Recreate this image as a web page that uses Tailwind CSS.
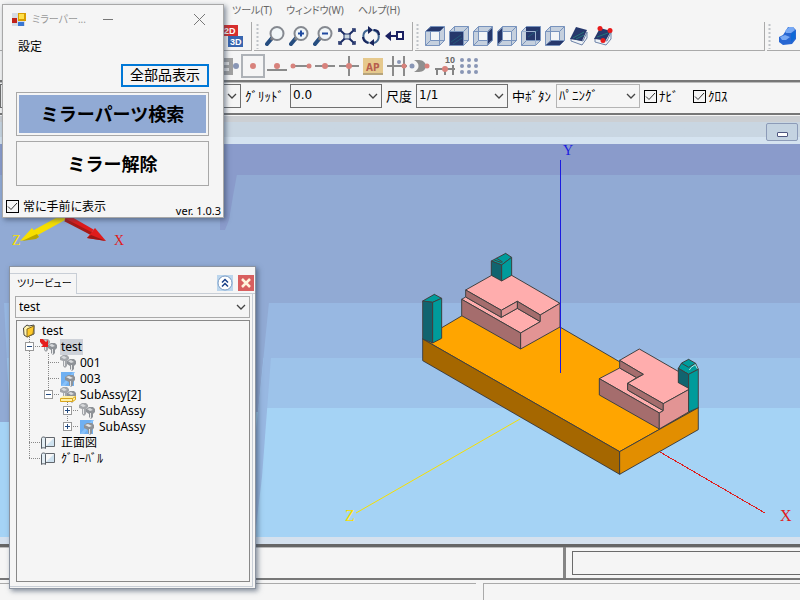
<!DOCTYPE html>
<html lang="ja">
<head>
<meta charset="utf-8">
<title>test</title>
<script src="https://cdn.jsdelivr.net/npm/@tailwindcss/browser@4"></script>
</head>
<body class="font-['Noto_Sans','Noto_Sans_CJK_JP',sans-serif] text-xs text-black bg-[#f5f5f5]">
<svg class="hidden" aria-hidden="true">
  <defs>
    <symbol id="cube" viewBox="0 0 20 20">
      <path d="M.5 5.5 5.500 .5h14v14l-5 5H.5z" fill="#c5d0de"/>
      <path d="M5.500 5.500h9v9h-9z" fill="#f3f5f7"/>
      <path d="M.5 5.500h14v14H.5zM5.500 .5h14v14h-14zM.5 5.500l5-5M14.500 5.500l5-5M14.500 19.500l5-5M.5 19.500l5-5" fill="none" stroke="#7893bd"/>
    </symbol>
    <symbol id="lens" viewBox="0 0 20 20">
      <path d="M2 18 7 12" stroke="#254d80" stroke-width="4" stroke-linecap="round"/>
      <path d="M6 14 8 11" stroke="#72777e" stroke-width="3"/>
      <circle cx="12" cy="7.500" r="6.500" fill="#f1f6f8" stroke="#858990" stroke-width="2"/>
    </symbol>
    <symbol id="bolt" viewBox="0 0 16 16">
      <path d="M0 2 3 0h4l2 2v2L7 6v5L5 13 3 11V6L0 5z" fill="#a3a6aa"/>
      <path d="M7 6 10 4h4l2 2v3l-2 2v3l-2 2-2-2v-3L7 9z" fill="#8e9297"/>
      <path d="M1 2 4 1l3 2-3 1zM8 6l3-1 3 2-3 1z" fill="#d8dadd"/>
      <path d="M4 6h1v5H4zM11 10h1v5h-1z" fill="#e8e9ea"/>
    </symbol>
    <symbol id="mirror" viewBox="0 0 16 16">
      <path d="M1 1h13v14H1z" fill="#6fb0f2"/>
      <path d="M1 15 13 1h2L5 15z" fill="#87c1fa"/>
      <path d="M5 6 8 4h5l2 2v3l-2 2v3l-2 2-2-2v-3L5 9z" fill="#8e9297"/>
      <path d="M6 6 9 5l4 2-3 1zM10 10h1v5h-1z" fill="#e4e6e8"/>
    </symbol>
    <symbol id="view" viewBox="0 0 16 16">
      <path d="M4.500 2.500h9v9h-9z" fill="#f7f7f7" stroke="#62676d"/>
      <path d="M5 11 13 3v8z" fill="#cfe2ef"/>
      <path d="M.5 3.500c0-2 4-2 4 0v10c0-1-4-1-4 0z" fill="#e3edf3" stroke="#555c64"/>
    </symbol>
    <symbol id="chev" viewBox="0 0 10 10"><path d="M1 3 5 7 9 3" fill="none" stroke="#444" stroke-width="1.300"/></symbol>
    <symbol id="grip" viewBox="0 0 3 26"><path d="M1.500 1v25" stroke="#bfc3c8" stroke-width="2" stroke-dasharray="2 2"/></symbol>
  </defs>
</svg>

<div class="relative flex h-screen flex-col overflow-hidden">
  <nav class="flex h-[22px] shrink-0 items-center gap-[14px] pl-[232px] text-[10px] text-[#666] [font-feature-settings:'palt']">
    <a href="#">ツール(T)</a><a href="#">ウィンドウ(W)</a><a href="#">ヘルプ(H)</a>
  </nav>

  <div class="flex h-[29px] shrink-0 gap-[2px]">
    <div class="flex w-[252px] items-center justify-end border-r border-b border-[#aaa] pr-2">
      <button aria-label="2D 3D"><svg class="h-6 w-5" viewBox="0 0 20 24"><path d="M0 1h15v11H0z" fill="#d72e2d"/><path d="M5 12h15v11H5z" fill="#3866b0"/><g font-family="Liberation Sans" font-weight="bold" font-size="9" fill="#fff"><text x="1" y="10">2D</text><text x="7" y="21">3D</text></g></svg></button>
    </div>
    <div class="flex w-[159px] items-center border-r border-b border-[#aaa] pl-[2px]">
      <svg class="mr-1 h-[26px] w-[3px]"><use href="#grip"/></svg>
      <button class="grid h-6 w-6 place-items-center" aria-label="ズーム"><svg class="h-5 w-5"><use href="#lens"/></svg></button>
      <button class="grid h-6 w-6 place-items-center" aria-label="拡大"><svg class="h-5 w-5"><use href="#lens"/><path d="M9 7.500h6M12 4.500v6" stroke="#1f4aa0" stroke-width="2"/></svg></button>
      <button class="grid h-6 w-6 place-items-center" aria-label="縮小"><svg class="h-5 w-5"><use href="#lens"/><path d="M9 7.500h6" stroke="#1f4aa0" stroke-width="2"/></svg></button>
      <button class="grid h-6 w-6 place-items-center" aria-label="全体表示"><svg class="h-5 w-5" viewBox="0 0 20 20" stroke="#1b2d66" stroke-width="1.500"><path d="M3 4 17 17M17 4 3 17" stroke-width="2"/><path d="M7 8h6v5H7z" fill="#c9d6df" stroke-width="1"/><path d="M2 6V3h3M15 3h3v3M2 15v3h3M15 18h3v-3" fill="none"/></svg></button>
      <button class="grid h-6 w-6 place-items-center" aria-label="回転"><svg class="h-5 w-5" viewBox="0 0 20 20" fill="none" stroke="#3f6591" stroke-width="2"><path d="M8 17C0 14 1 5 8 4M12 4c8 2 7 11 1 13"/><path d="M7 0v8l5-4zM13 13v7l-5-3z" fill="#17245c" stroke="none"/><path d="M2 11c0 3 2 5 5 6M18 9c0-3-2-5-5-5" stroke="#17245c"/></svg></button>
      <button class="grid h-6 w-6 place-items-center" aria-label="前画面"><svg class="h-5 w-5" viewBox="0 0 20 20"><path d="M5 10h7" stroke="#1b2162" stroke-width="2"/><path d="M6 5v10L0 10z" fill="#1b2162"/><path d="M12 6h6v7h-6z" fill="#fff" stroke="#1b2162" stroke-width="2"/></svg></button>
    </div>
    <div class="flex flex-1 items-center border-r border-b border-[#aaa] pl-[1px]">
      <svg class="mr-1 h-[26px] w-[3px]"><use href="#grip"/></svg>
      <button class="grid h-6 w-6 place-items-center" aria-label="上面"><svg class="h-5 w-5"><use href="#cube"/><path d="M1 5 6 1h13l-4 4z" fill="#26386c"/></svg></button>
      <button class="grid h-6 w-6 place-items-center" aria-label="正面"><svg class="h-5 w-5"><use href="#cube"/><path d="M1 6h13v13H1z" fill="#26386c"/><path d="M2 16 12 9M4 18 13 12" stroke="#235a78"/></svg></button>
      <button class="grid h-6 w-6 place-items-center" aria-label="右面"><svg class="h-5 w-5"><use href="#cube"/><path d="M15 6 19 2v12l-4 4z" fill="#26386c"/></svg></button>
      <button class="grid h-6 w-6 place-items-center" aria-label="左面"><svg class="h-5 w-5"><use href="#cube"/><path d="M1 6 5 2v12l-4 4z" fill="#26386c"/></svg></button>
      <button class="grid h-6 w-6 place-items-center" aria-label="背面"><svg class="h-5 w-5"><use href="#cube"/><path d="M5 1h14v13H5z" fill="#26386c"/><path d="M7 11 17 4" stroke="#235a78"/><path d="M.5 5.500h14v14" fill="none" stroke="#9db2d0"/></svg></button>
      <button class="grid h-6 w-6 place-items-center" aria-label="下面"><svg class="h-5 w-5"><use href="#cube"/><path d="M1 19 6 15h13l-4 4z" fill="#26386c"/></svg></button>
      <button class="grid h-6 w-6 place-items-center" aria-label="面指定"><svg class="h-5 w-5" viewBox="0 0 20 20"><path d="m2 12 12 3 4-9v6l-5 7-11-4z" fill="#eef2f6" stroke="#6d83a9"/><path d="M7 1 18 4 13 15 1 13z" fill="#26386c"/><path d="M4 12 15 6M7 13 15 9" stroke="#247478"/></svg></button>
      <button class="grid h-6 w-6 place-items-center" aria-label="3点指定"><svg class="h-5 w-5" viewBox="0 0 20 20"><path d="m2 12 12 3 4-9v7l-5 6-11-3z" fill="#eef2f6" stroke="#6d83a9"/><path d="M7 2 18 5 13 14 1 13z" fill="#26386c"/><path d="M4 11 15 7" stroke="#247478"/><g fill="#e81b1b"><circle cx="7" cy="2.500" r="2.500"/><circle cx="17" cy="4.500" r="2.500"/><circle cx="10" cy="14.500" r="2.500"/></g></svg></button>
    </div>
    <div class="flex w-[33px] items-center border-b border-[#aaa] pl-[1px]">
      <svg class="mr-2 h-[26px] w-[3px]"><use href="#grip"/></svg>
      <button aria-label="ソリッド"><svg class="h-5 w-5" viewBox="0 0 20 20"><path d="M6 6 9 1h5l3 3v9l-4 5-9 1-4-3v-5l4-2z" fill="#2766d2"/><path d="M6 5 10 1h4l2 3-4 3H7zM1 11l5-2 5 2-4 3H3z" fill="#78a9f4"/><path d="M12 8 16 5v7l-4 4z" fill="#0c68d6"/></svg></button>
    </div>
  </div>

  <div class="flex h-[29px] shrink-0 items-center pl-[217px]">
    <button class="h-6 w-6" aria-label="グリッド点"><svg class="h-6 w-6"><path d="M2 4h14v17H2z" fill="#a1a1a1"/><path d="M7 8h5v3H7zM7 14h5v3H7z" fill="#ddd"/><circle cx="19" cy="12" r="3" fill="#8996b5"/></svg></button>
    <button class="grid h-6 w-6 place-items-center border-2 border-[#aeb2b7]" aria-label="点"><svg class="h-5 w-5"><circle cx="10" cy="10" r="3" fill="#d8827c"/></svg></button>
    <button class="h-6 w-6" aria-label="線上点"><svg class="h-6 w-6"><path d="M2 16h20" stroke="#8b8b8b" stroke-width="2"/><circle cx="12" cy="12" r="3" fill="#d8827c"/></svg></button>
    <button class="h-6 w-6" aria-label="端点"><svg class="h-6 w-6"><path d="M4 12h16" stroke="#8b8b8b" stroke-width="2"/><circle cx="4" cy="12" r="2.500" fill="#d8827c"/><circle cx="20" cy="12" r="2.500" fill="#d8827c"/></svg></button>
    <button class="h-6 w-6" aria-label="中点"><svg class="h-6 w-6"><path d="M2 12h20" stroke="#8b8b8b" stroke-width="2"/><circle cx="12" cy="12" r="3" fill="#d8827c"/></svg></button>
    <button class="h-6 w-6" aria-label="交点"><svg class="h-6 w-6"><path d="M2 12h20M12 2v20" stroke="#8b8b8b" stroke-width="2"/><circle cx="12" cy="12" r="3" fill="#d8827c"/></svg></button>
    <button class="h-6 w-6" aria-label="AP"><svg class="h-6 w-6"><path d="M2 4h20v17H2z" fill="#e6c98d"/><path d="M2 20h20" stroke="#b6a47c" stroke-width="2"/><text x="5" y="17" font-family="DejaVu Sans Condensed" font-weight="bold" font-size="10" fill="#b75e4e">AP</text></svg></button>
    <button class="h-6 w-6" aria-label="垂点"><svg class="h-6 w-6"><path d="M2 12h20M8 2v20M19 2v20" stroke="#8b8b8b" stroke-width="2"/><circle cx="14" cy="8" r="2" fill="#8996b5"/><circle cx="19" cy="12" r="2.500" fill="#d8827c"/></svg></button>
    <button class="h-6 w-6" aria-label="接点"><svg class="h-6 w-6"><path d="M5 6h5c4 0 7 3 7 6s-3 6-7 6H5c6-3 6-9 0-12z" fill="#8f8f8f"/><circle cx="3" cy="12" r="2.500" fill="#8996b5"/><circle cx="18" cy="12" r="2.500" fill="#d8827c"/></svg></button>
    <button class="h-6 w-6" aria-label="分割点"><svg class="h-6 w-6"><path d="M2 15h20M4 14v7M12 14v7M20 11v10" stroke="#858585" stroke-width="2"/><circle cx="12" cy="15" r="3" fill="#d8827c"/><text x="12" y="9" font-family="Liberation Sans" font-weight="bold" font-size="9" fill="#666">10</text></svg></button>
    <button class="h-6 w-6" aria-label="格子点"><svg class="h-6 w-6" fill="#8996b5"><g id="dots"><circle cx="5" cy="6" r="2"/><circle cx="12" cy="6" r="2"/><circle cx="19" cy="6" r="2"/></g><use href="#dots" y="6"/><use href="#dots" y="12"/></svg></button>
  </div>

  <div class="flex h-[35px] shrink-0 items-start border-y-2 border-[#777] pt-[2px] text-[13px] leading-6 shadow-[inset_0_1px_#bbb]">
    <label class="grid w-[241px]"><select aria-label="レイヤ" class="col-start-1 row-start-1 h-6 appearance-none border border-[#6f6f6f]"><option></option></select><svg class="pointer-events-none col-start-1 row-start-1 mr-1 h-[10px] w-[10px] self-center justify-self-end"><use href="#chev"/></svg></label>
    <label for="grid" class="ml-1 w-[45px] whitespace-nowrap">ｸﾞﾘｯﾄﾞ</label>
    <div class="grid w-[92px]"><select id="grid" class="col-start-1 row-start-1 h-6 appearance-none border border-[#6f6f6f] pl-[2px] pb-[3px] font-['DejaVu_Sans',sans-serif] text-xs"><option>0.0</option></select><svg class="pointer-events-none col-start-1 row-start-1 mr-1 h-[10px] w-[10px] self-center justify-self-end"><use href="#chev"/></svg></div>
    <label for="scale" class="ml-1 w-[30px] text-[13px]">尺度</label>
    <div class="grid w-[92px]"><select id="scale" class="col-start-1 row-start-1 h-6 appearance-none border border-[#6f6f6f] pl-[2px] pb-[3px] font-['DejaVu_Sans',sans-serif] text-xs"><option>1/1</option></select><svg class="pointer-events-none col-start-1 row-start-1 mr-1 h-[10px] w-[10px] self-center justify-self-end"><use href="#chev"/></svg></div>
    <label for="mid" class="ml-1 w-11 whitespace-nowrap">中ﾎﾞﾀﾝ</label>
    <div class="grid w-[84px]"><select id="mid" class="col-start-1 row-start-1 h-6 appearance-none border border-[#b4b4b4] pl-[2px] pb-[3px] text-[13px] leading-5"><option>ﾊﾟﾆﾝｸﾞ</option></select><svg class="pointer-events-none col-start-1 row-start-1 mr-1 h-[10px] w-[10px] self-center justify-self-end"><use href="#chev"/></svg></div>
    <label class="ml-1 flex w-[49px] items-center gap-[2px] whitespace-nowrap"><span class="grid place-items-center"><input type="checkbox" checked class="col-start-1 row-start-1 h-[13px] w-[13px] appearance-none border border-black"><svg class="pointer-events-none col-start-1 row-start-1 h-[11px] w-[11px]"><path d="M1 5.500 4 8.500 10 2" fill="none" stroke="#333"/></svg></span>ﾅﾋﾞ</label>
    <label class="flex items-center gap-[2px] whitespace-nowrap"><span class="grid place-items-center"><input type="checkbox" checked class="col-start-1 row-start-1 h-[13px] w-[13px] appearance-none border border-black"><svg class="pointer-events-none col-start-1 row-start-1 h-[11px] w-[11px]"><path d="M1 5.500 4 8.500 10 2" fill="none" stroke="#333"/></svg></span>ｸﾛｽ</label>
  </div>

  <div class="flex h-[29px] shrink-0 items-start justify-end border-t border-b-[7px] border-t-[#f5f5f5] border-b-[#d5e3f0] bg-linear-to-b from-[#cccfd3] from-30% to-[#c9d6e2] to-30% pt-[7px] pr-[2px]">
    <button aria-label="最小化" class="z-10 grid h-[18px] w-8 shrink-0 place-items-center rounded-[2px] border border-[#8c9bb8] bg-[#c4d3e1]"><span class="mt-1 h-[5px] w-[11px] rounded-[1px] border border-[#4e5680] bg-white"></span></button>
  </div>

  <main class="relative min-h-0 flex-1 overflow-hidden bg-[linear-gradient(#8a9bcb_31px,#91aad4_31px_159px,#98b8e2_159px_214px,#9dc3ea_214px_264px,#a5d3f5_264px)]">
    <svg class="absolute top-0 left-0 h-[393px] w-[800px]" viewBox="0 144 800 393" role="img" aria-label="3Dモデル">
      <path d="M220 174h17l-4 22-4 24-4 10h-5z" fill="#8a9bcb"/>
      <path d="M250 302h19l-5 50-6 60h-8zM0 302h4l6 120H0z" fill="#91aad4"/>
      <path d="M256 430 264 357h7l-9 120-6 50z" fill="#98b8e2"/>
      <path d="M64 217 35 233" stroke="#f7df00" stroke-width="6"/><path d="m20 241 12-13 7 9z" fill="#f7df00"/><path d="m22 241 14-2 3-2-2-3z" fill="#b8a600"/>
      <path d="M66 217 92 232" stroke="#e01b1b" stroke-width="6"/><path d="m65 220 27 14" stroke="#a51a17" stroke-width="3"/><path d="m106 241-11-13-8 10z" fill="#e01b1b"/><path d="m106 241-15-6-4 3z" fill="#9b1714"/>
      <g font-family="Liberation Serif" font-size="14">
        <text x="12" y="245" fill="#f7df00">Z</text><text x="114" y="245" fill="#e01b1b">X</text>
        <text x="563" y="155" fill="#1b1be0">Y</text><text x="345" y="521" font-size="16" fill="#f7df00">Z</text><text x="780" y="521" font-size="16" fill="#e01b1b">X</text>
      </g>
      <path d="M520 419 356 513" stroke="#f7df00"/><path d="m660 452 105 61" stroke="#e01b1b" shape-rendering="crispEdges"/>
      <g transform="translate(400 240) scale(.3333)" stroke="#404040" stroke-width="3" stroke-linejoin="round" shape-rendering="crispEdges">
        <path fill="#ffa500" d="M68 297 303 158 895 503 659 635z"/>
        <path fill="#a56700" d="M68 297 659 635V703L68 362z"/>
        <path fill="#e28e00" d="M659 635 895 503V569L659 703z"/>
        <path fill="#009b9b" d="M68 183 103 163 125 175 98 187z"/>
        <path fill="#11646f" d="M68 183 98 187V309L68 297z"/>
        <path fill="#009b9b" d="M98 187 125 175V295L98 309z"/>
        <g fill="#ffadad"><path d="M185 178 197 171 304 232 352 205 421 245 362 279z"/><path d="M197 150 275 106H335L480 190 421 225 352 184 304 211z"/></g>
        <g fill="#a56d6d"><path d="M185 178 362 279V327L185 227z"/><path d="M197 150 304 211V232L197 171z"/><path d="M352 184 421 225V245L352 205z"/></g>
        <g fill="#e29494"><path d="M304 211 352 184V205L304 232z"/><path d="M362 279 421 245V225L480 190V261L362 327z"/></g>
        <path fill="#009b9b" d="M274 63 317 40 335 52 305 75z"/><path fill="#11646f" d="M274 63 305 75V123L274 106z"/><path fill="#009b9b" d="M305 75 335 52V106L305 123z"/><path fill="none" d="M290 55 308 66M283 60 305 68"/>
        <g fill="#ffadad"><path d="M598 416 659 384 710 413 683 430V450L790 512 778 519z"/><path d="M659 361 718 327 866 412V449L790 491 683 430 730 403z"/></g>
        <g fill="#a56d6d"><path d="M659 361 730 403 710 413 659 384z"/><path d="M683 430 790 491V512L683 450z"/><path d="M598 416 778 519V567L598 465z"/></g>
        <path fill="#e29494" d="M790 491 866 449V516L778 567V519L790 512z"/>
        <path fill="#009b9b" d="M835 385 845 369 866 358 887 370 895 388 866 403z"/><path fill="#11646f" d="M835 385 866 403V445L835 428z"/><path fill="#009b9b" d="M866 403 895 388V503L866 516z"/><path fill="none" d="M845 370 866 382 887 370"/><path fill="none" stroke="#b7e4e4" d="M868 390 874 382 886 374 892 386"/>
      </g>
      <path d="M560.500 160v213" stroke="#1b1be0"/>
    </svg>
  </main>

  <div class="h-[7px] shrink-0 bg-[#d5e1ee]"></div>
  <div class="flex h-9 shrink-0 border-t-[3px] border-b-2 border-t-[#666] border-b-[#777] shadow-[inset_0_1px_#bbb]">
    <div class="w-[566px] shrink-0 border-r-[3px] border-[#858585]"></div>
    <input aria-label="入力" class="mt-1 ml-[6px] h-6 min-w-0 flex-1 border border-r-0 border-[#6b6b6b]">
  </div>
  <footer class="flex h-5 shrink-0 gap-[7px] pt-[3px]">
    <div class="w-[476px] border-t border-[#aaa]"></div>
    <div class="flex-1 border-t border-l border-[#aaa]"></div>
  </footer>

  <section aria-label="ミラーパーツ" class="absolute top-1 left-[2px] flex h-[214px] w-[222px] flex-col border border-[#a8a8a8] bg-[#f5f5f5] pr-[14px] pl-[13px] shadow-[2px_2px_5px_#34455c99]">
    <header class="flex h-7 items-center pt-[2px] pr-1 text-[#999]">
      <svg class="-ml-1 h-[14px] w-[14px]" viewBox="0 0 14 14"><path d="M0 0h13v13H0z" fill="#d5dbe4"/><path d="M6 0h8v8H6z" fill="#d99e00"/><path d="M7 1h5v5H7z" fill="#ffe04a"/><path d="M0 5h5v5H0z" fill="#c22119"/><path d="M6 9h6v4H6z" fill="#3976d2"/></svg>
      <h1 class="ml-[6px] flex-1 text-[10px] [font-feature-settings:'palt']">ミラーパー...</h1>
      <button aria-label="最小化" class="mr-20"><svg class="h-[11px] w-[11px]"><path d="M0 5.500h10" stroke="#777"/></svg></button>
      <button aria-label="閉じる"><svg class="h-[11px] w-[11px]"><path d="m0 0 11 11M11 0 0 11" stroke="#777"/></svg></button>
    </header>
    <a href="#" class="mt-[5px] ml-[2px] h-[18px] leading-[18px]">設定</a>
    <button class="mt-2 h-[23px] w-[88px] self-end border-2 border-[#0078d7] text-sm leading-4">全部品表示</button>
    <button class="mt-[5px] h-[45px] border border-[#a8a8a8] p-[2px] text-lg font-bold"><span class="flex h-full items-center justify-center bg-[#91aad4]">ミラーパーツ検索</span></button>
    <button class="mt-[5px] h-[45px] border border-[#a8a8a8] text-lg font-bold">ミラー解除</button>
    <div class="-mr-3 -ml-[10px] mt-[11px] flex items-center justify-between">
      <label class="flex items-center gap-1"><span class="grid place-items-center"><input type="checkbox" checked class="col-start-1 row-start-1 h-[13px] w-[13px] appearance-none border border-black"><svg class="pointer-events-none col-start-1 row-start-1 h-[11px] w-[11px]"><path d="M1 5.500 4 8.500 10 2" fill="none" stroke="#333"/></svg></span><span class="[font-feature-settings:'palt']">常に手前に表示</span></label>
      <span class="pt-2 text-[11px] leading-3">ver. 1.0.3</span>
    </div>
  </section>

  <section aria-label="ツリービュー" class="absolute top-[266px] left-[9px] flex h-[323px] w-[247px] flex-col border border-[#8b93a0] bg-[#f5f5f5] pb-px shadow-[2px_2px_5px_#34455c99]">
    <header class="flex h-[27px] items-end border-b border-[#c8ced6] pt-1">
      <h2 class="-mb-px h-[21px] w-[67px] border border-b-0 border-l-0 border-[#c8ced6] bg-[#f5f5f5] pl-[7px] text-[10px] leading-[18px] whitespace-nowrap [font-feature-settings:'palt']">ツリービュー</h2>
      <div class="mb-[2px] flex flex-1 justify-end gap-[5px] pr-px">
        <button aria-label="折りたたむ"><svg class="h-4 w-4"><path d="M0 0h16v16H0z" fill="#bcd6ed"/><circle cx="8" cy="8" r="7" fill="#fff" stroke="#7a9bc4"/><path d="M5 7.500 8 4.500l3 3M5 11.500l3-3 3 3" fill="none" stroke="#19408a" stroke-width="1.500"/></svg></button>
        <button aria-label="閉じる"><svg class="h-4 w-4"><path d="M0 0h16v16H0z" fill="#d85f5f"/><path d="m4 4 8 8M12 4l-8 8" stroke="#fff3dc" stroke-width="2.500"/></svg></button>
      </div>
    </header>
    <div class="mr-[2px] flex min-h-0 flex-1 flex-col border-r border-b border-[#c8ced6] pt-[2px] pr-[2px] pb-1 pl-[5px]">
      <div class="grid"><select aria-label="ファイル" class="col-start-1 row-start-1 h-[22px] appearance-none border border-[#aaa] pl-[3px] text-xs"><option>test</option></select><svg class="pointer-events-none col-start-1 row-start-1 mr-1 h-[10px] w-[10px] self-center justify-self-end"><use href="#chev"/></svg></div>
      <div class="relative mt-[2px] ml-px flex-1 border border-[#888] pt-[2px]">
        <svg class="absolute top-0 left-0 h-[150px] w-24" viewBox="17 321 96 150" fill="none" shape-rendering="crispEdges">
          <path d="M29.500 337v122M48.500 353v42M67.500 402v25M29 346.500h12M48 362.500h11M48 378.500h11M48 394.500h11M67 410.500h11M67 426.500h11M29 442.500h11M29 458.500h11" stroke="#888" stroke-dasharray="1 1"/>
          <g fill="#fff" stroke="#999"><path d="M25.500 342.500h8v8h-8zM44.500 390.500h8v8h-8zM63.500 406.500h8v8h-8zM63.500 422.500h8v8h-8z"/></g>
          <path d="M27 346.500h5M46 394.500h5M65 410.500h5M65 426.500h5M67.500 408v5M67.500 424v5" stroke="#234a80"/>
        </svg>
        <ul class="relative leading-4 [&>li]:flex [&>li]:h-4 [&>li]:items-center [&>li]:gap-1">
          <li class="pl-[5px]"><svg class="h-4 w-4" viewBox="0 0 16 16"><path d="M1.500 5 5 2l2 1 5-1v9l-7 3-3-2z" fill="#fff3b0" stroke="#444"/><path d="m5 6 7-3-1 8-6 3z" fill="#ffc928" stroke="#846b24"/></svg>test</li>
          <li class="pl-6"><svg class="h-4 w-4 overflow-visible"><use href="#bolt"/><path d="M-1 0h3l3 3 2-2v7H0l2-2-3-3z" fill="#e61e1e"/></svg><span class="-ml-px bg-[#cdd1d8] px-px">test</span></li>
          <li class="pl-[43px]"><svg class="h-4 w-4"><use href="#bolt"/></svg>001</li>
          <li class="pl-[43px]"><svg class="h-4 w-4"><use href="#mirror"/></svg>003</li>
          <li class="pl-[43px]"><svg class="h-4 w-4"><use href="#bolt"/><path d="M0 11 3 9h13v4l-3 2H0z" fill="#fff0a8"/><path d="M.5 11.500h12v3H.5zM12.500 11.500l3-2v3l-3 2" fill="none" stroke="#d7a51d"/></svg>SubAssy[2]</li>
          <li class="pl-[62px]"><svg class="h-4 w-4"><use href="#bolt"/></svg>SubAssy</li>
          <li class="pl-[62px]"><svg class="h-4 w-4"><use href="#mirror"/></svg>SubAssy</li>
          <li class="pl-6"><svg class="h-4 w-4"><use href="#view"/></svg>正面図</li>
          <li class="pl-6"><svg class="h-4 w-4"><use href="#view"/></svg>ｸﾞﾛｰﾊﾞﾙ</li>
        </ul>
      </div>
    </div>
  </section>
</div>
</body>
</html>
